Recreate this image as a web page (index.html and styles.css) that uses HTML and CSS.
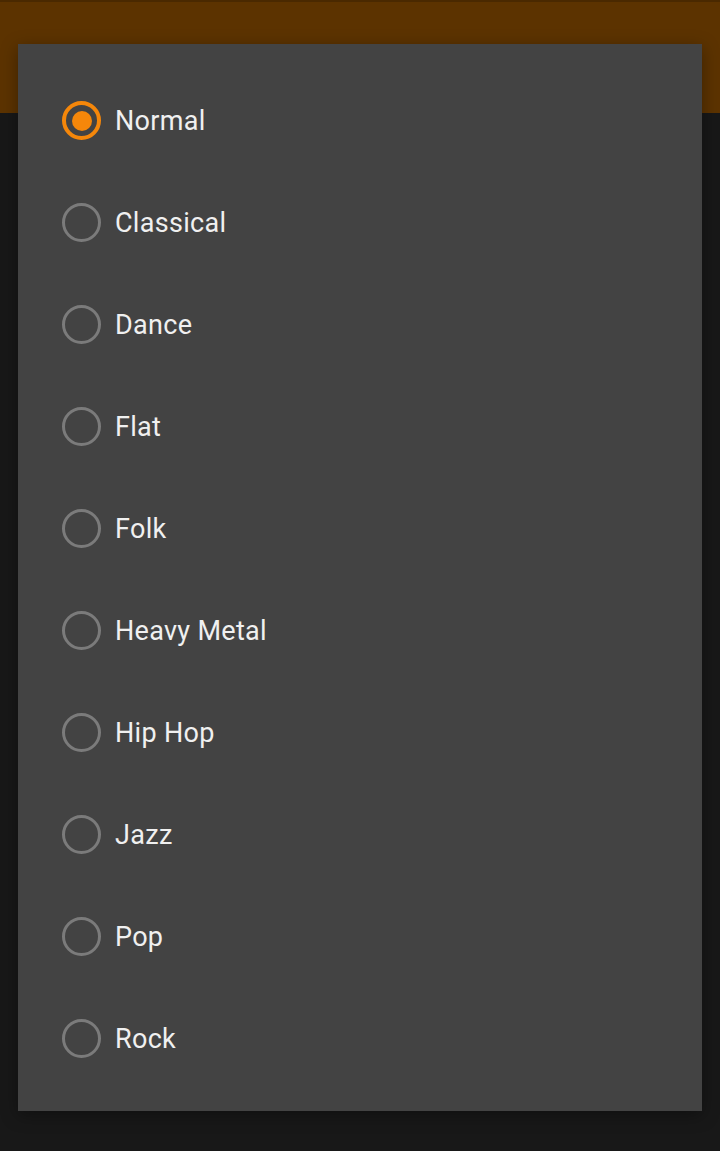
FILE: index.html
```html
<!DOCTYPE html>
<html>
<head>
<meta charset="utf-8">
<link rel="stylesheet" href="styles.css">
</head>
<body>
<div class="appbar"></div>
<div class="dialog">
  <div class="row"><span class="radio checked"></span><span class="label">Normal</span></div>
  <div class="row"><span class="radio"></span><span class="label">Classical</span></div>
  <div class="row"><span class="radio"></span><span class="label">Dance</span></div>
  <div class="row"><span class="radio"></span><span class="label">Flat</span></div>
  <div class="row"><span class="radio"></span><span class="label">Folk</span></div>
  <div class="row"><span class="radio"></span><span class="label">Heavy Metal</span></div>
  <div class="row"><span class="radio"></span><span class="label">Hip Hop</span></div>
  <div class="row"><span class="radio"></span><span class="label">Jazz</span></div>
  <div class="row"><span class="radio"></span><span class="label">Pop</span></div>
  <div class="row"><span class="radio"></span><span class="label">Rock</span></div>
</div>
</body>
</html>
```
FILE: styles.css
```css
html, body {
  margin: 0;
  padding: 0;
}
body {
  width: 720px;
  height: 1151px;
  background: #181818;
  font-family: Roboto, "Noto Sans", sans-serif;
  position: relative;
  overflow: hidden;
}
.appbar {
  height: 113px;
  background: #5c3300;
  border-top: 2px solid #4a2900;
  box-sizing: border-box;
}
.dialog {
  position: absolute;
  left: 18px;
  top: 44px;
  width: 684px;
  height: 1067px;
  background: #434343;
  box-sizing: border-box;
  padding-top: 25px;
  box-shadow: 0 4px 16px rgba(0,0,0,0.35);
}
.row {
  height: 102px;
  display: flex;
  align-items: center;
  padding-left: 44px;
}
.radio {
  width: 39px;
  height: 39px;
  box-sizing: border-box;
  border-radius: 50%;
  border: 3px solid #7b7b7b;
  flex: none;
  position: relative;
  margin-top: 1px;
}
.radio.checked {
  border: 4px solid #f5870a;
}
.radio.checked::after {
  content: "";
  position: absolute;
  left: 5.5px;
  top: 5.5px;
  width: 20px;
  height: 20px;
  border-radius: 50%;
  background: #f5870a;
}
.label {
  margin-left: 14px;
  padding-top: 2px;
  font-size: 27px;
  letter-spacing: 0.3px;
  color: #f0f0f0;
  line-height: 1;
}
```
